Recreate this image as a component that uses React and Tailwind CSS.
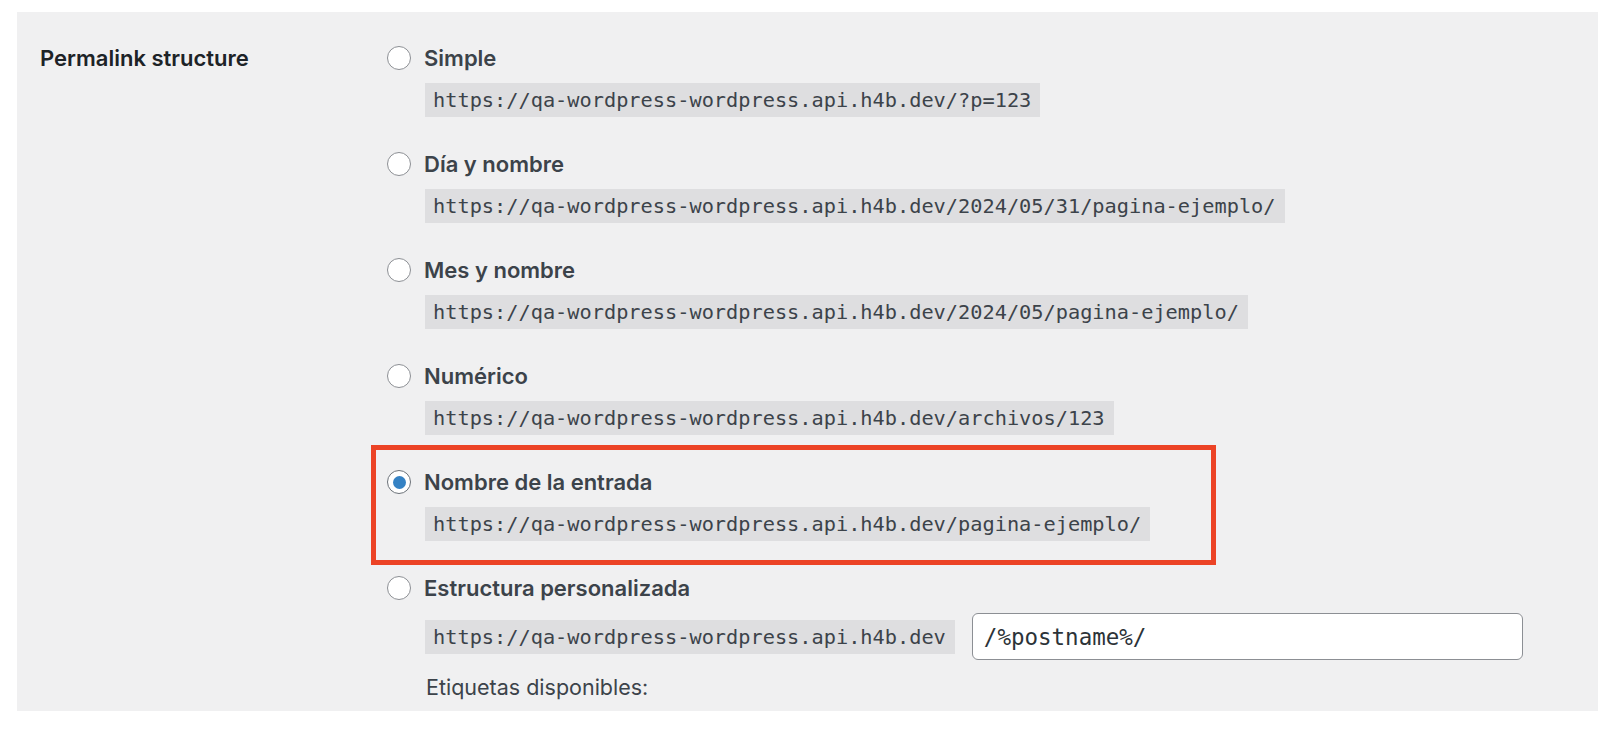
import React from "react";

const options = [
  { label: "Simple", url: "https://qa-wordpress-wordpress.api.h4b.dev/?p=123" },
  { label: "Día y nombre", url: "https://qa-wordpress-wordpress.api.h4b.dev/2024/05/31/pagina-ejemplo/" },
  { label: "Mes y nombre", url: "https://qa-wordpress-wordpress.api.h4b.dev/2024/05/pagina-ejemplo/" },
  { label: "Numérico", url: "https://qa-wordpress-wordpress.api.h4b.dev/archivos/123" },
  { label: "Nombre de la entrada", url: "https://qa-wordpress-wordpress.api.h4b.dev/pagina-ejemplo/", checked: true },
];

const mono = "font-['DejaVu_Sans_Mono','Liberation_Mono',monospace] text-[20.3px]";

const Radio = ({ checked }) => (
  <span
    className={`flex items-center justify-center w-[24px] h-[24px] rounded-full bg-white border-[1.5px] shrink-0 ${
      checked ? "border-[#6b7178]" : "border-[#8c8f94]"
    }`}
  >
    {checked && <span className="w-[13px] h-[13px] rounded-full bg-[#3582c4]" />}
  </span>
);

const App = () => {
  return (
    <div className="w-[1622px] h-[730px] bg-white font-['Inter','Noto_Sans',sans-serif] pt-[12px] pl-[17px]">
      <div className="relative w-[1581px] h-[699px] bg-[#f0f0f1] flex overflow-hidden">
        {/* Label column */}
        <div className="w-[370px] pl-[23px] pt-[31px] shrink-0">
          <h2 className="text-[22px] leading-[30px] font-semibold text-[#1d2327]">Permalink structure</h2>
        </div>

        {/* Options */}
        <div className="pt-[31px]">
          {options.map((opt, i) => (
            <div key={i} className="mb-[32px]">
              <label className="flex items-center gap-[13px] h-[30px]">
                <Radio checked={opt.checked} />
                <span className="text-[22px] font-semibold text-[#3c434a]">{opt.label}</span>
              </label>
              <div className="mt-[10px] ml-[38px]">
                <code className={`inline-block bg-[#dedee0] text-[#3c434a] leading-[34px] pl-[8px] pr-[9px] ${mono}`}>
                  {opt.url}
                </code>
              </div>
            </div>
          ))}

          <div>
            <label className="flex items-center gap-[13px] h-[30px]">
              <Radio />
              <span className="text-[22px] font-semibold text-[#3c434a]">Estructura personalizada</span>
            </label>
            <div className="mt-[10px] ml-[38px] flex items-center gap-[17px]">
              <code className={`inline-block bg-[#dedee0] text-[#3c434a] leading-[34px] pl-[8px] pr-[9px] ${mono}`}>
                https://qa-wordpress-wordpress.api.h4b.dev
              </code>
              <input
                type="text"
                defaultValue="/%postname%/"
                className="w-[551px] h-[47px] bg-white border-[1.5px] border-[#8c8f94] rounded-[6px] pl-[11px] text-[#2c3338] outline-none font-['DejaVu_Sans_Mono','Liberation_Mono',monospace] text-[22.5px]"
              />
            </div>
            <p className="mt-[13px] ml-[39px] text-[21.5px] leading-[28px] text-[#3c434a]">Etiquetas disponibles:</p>
          </div>
        </div>

        {/* Annotation box */}
        <div className="absolute left-[354px] top-[433px] w-[845px] h-[120px] border-[5px] border-[#ec4326]" />
      </div>
    </div>
  );
};

export default App;
